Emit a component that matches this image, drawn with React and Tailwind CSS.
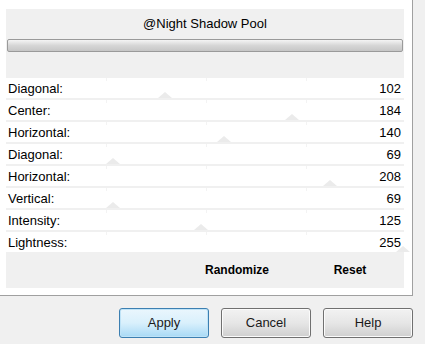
import React from "react";

const rows = [
  ["Diagonal:", 102],
  ["Center:", 184],
  ["Horizontal:", 140],
  ["Diagonal:", 69],
  ["Horizontal:", 208],
  ["Vertical:", 69],
  ["Intensity:", 125],
  ["Lightness:", 255],
];

function Row({ label, value }) {
  const center = value * 1.557;
  return (
    <div className="relative h-[20px] bg-white flex items-center justify-between pl-[2px] pr-[3px] text-[13px] leading-none text-black">
      <span className="relative z-10">{label}</span>
      <span className="relative z-10">{value}</span>
      <div
        className="absolute bottom-0 w-0 h-0 border-l-[7px] border-r-[7px] border-b-[6px] border-l-transparent border-r-transparent border-b-[#ebebeb]"
        style={{ left: `${center - 7}px` }}
      />
      <div className="absolute top-0 left-[100px] w-px h-[3px] bg-[#f3f3f3]" />
      <div className="absolute top-0 left-[200px] w-px h-[3px] bg-[#f3f3f3]" />
      <div className="absolute top-0 left-[300px] w-px h-[3px] bg-[#f3f3f3]" />
    </div>
  );
}

function Btn({ children, primary }) {
  return (
    <div
      className={
        "w-[90px] h-[30px] rounded-[3px] border flex items-center justify-center text-[13px] text-[#1a1a1a] " +
        (primary
          ? "border-[#3c7fb1] bg-gradient-to-b from-[#eaf6fd] via-[#d9f0fc] to-[#a7d9f5] shadow-[inset_0_0_0_1px_#bfe3f7]"
          : "border-[#707070] bg-gradient-to-b from-[#f2f2f2] via-[#e6e6e6] to-[#cfcfcf] shadow-[inset_0_0_0_1px_#fbfbfb]")
      }
    >
      {children}
    </div>
  );
}

export default function App() {
  return (
    <div
      className="w-[425px] h-[344px] bg-[#f0f0f0] flex flex-col overflow-hidden"
      style={{ fontFamily: '"Liberation Sans", Arial, sans-serif' }}
    >
      <div className="flex">
        <div className="w-[413px] h-[296px] bg-white border-r border-b border-[#a0a0a0] pl-[6px] pt-[9px]">
          <div className="w-[398px] h-[279px] bg-[#f0f0f0] flex flex-col">
            <div className="h-[30px] flex items-center justify-center text-[13px] text-black">
              @Night Shadow Pool
            </div>
            <div className="mx-[1px] h-[13px] rounded-[2px] border border-[#9a9a9a] bg-gradient-to-b from-[#f4f4f4] via-[#d6d6d6] to-[#c6c6c6]" />
            <div className="h-[26px]" />
            <div className="flex flex-col gap-[2px]">
              {rows.map(([l, v], i) => (
                <Row key={i} label={l} value={v} />
              ))}
            </div>
            <div className="flex-1 flex items-center justify-end pr-[4px] gap-[13px] text-[12px] font-bold text-black">
              <div className="w-[100px] text-center">Randomize</div>
              <div className="w-[100px] text-center">Reset</div>
            </div>
          </div>
        </div>
      </div>
      <div className="flex justify-end gap-[12px] pr-[12px] pt-[12px]">
        <Btn primary>Apply</Btn>
        <Btn>Cancel</Btn>
        <Btn>Help</Btn>
      </div>
    </div>
  );
}
